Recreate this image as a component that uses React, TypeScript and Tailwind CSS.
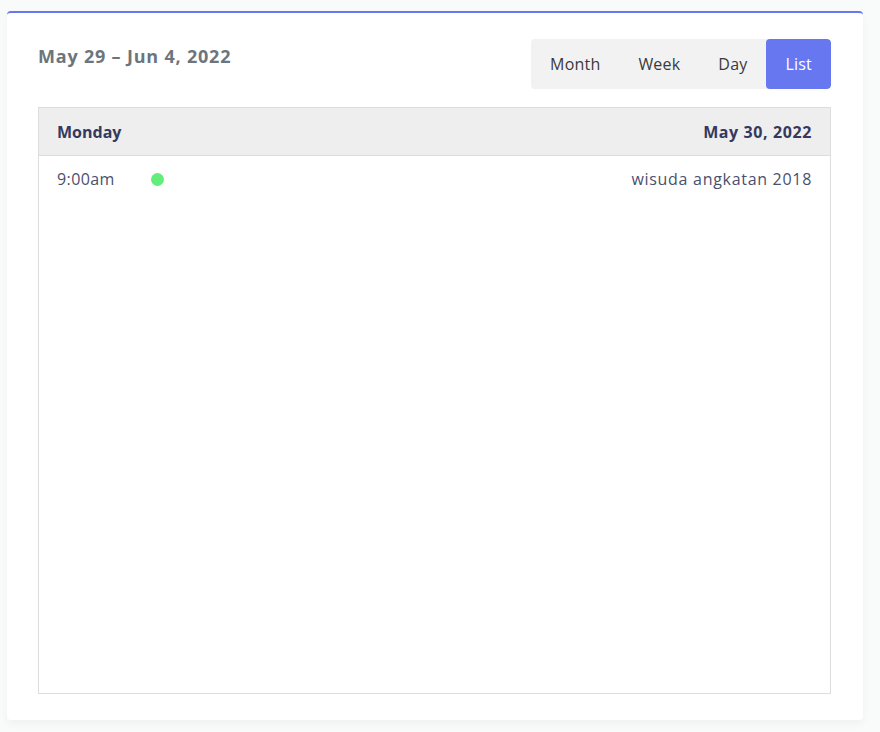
import React from "react";

const views = ["Month", "Week", "Day", "List"];

const App = () => {
  const active = "List";

  return (
    <div
      className="min-h-screen bg-[#f9fafa] pt-[11px] pl-[7px] pr-[17px] pb-[12px]"
      style={{ fontFamily: '"Open Sans", "Noto Sans", sans-serif' }}
    >
      <div className="w-[856px] h-[709px] bg-white rounded-[4px] border-t-2 border-[#6777ef] shadow-[0_4px_8px_rgba(0,0,0,0.04)] pl-[31px] pr-[32px] pt-[26px] pb-[26px] flex flex-col">
        {/* TOOLBAR */}
        <div className="flex justify-between items-start mb-[18px]">
          <h2 className="text-[18px] font-bold text-[#6c757d] mt-[3px] leading-[28px] tracking-[0.8px]">
            May 29 – Jun 4, 2022
          </h2>

          <div className="flex bg-[#f2f2f2] rounded-[4px] h-[50px] overflow-hidden">
            {views.map((v) => (
              <button
                key={v}
                className={
                  v === active
                    ? "px-[19px] text-[16px] bg-[#6777ef] text-white rounded-[4px] tracking-[0.2px]"
                    : "px-[19px] text-[16px] text-[#3a3a3a] tracking-[0.2px]"
                }
              >
                {v}
              </button>
            ))}
          </div>
        </div>

        {/* LIST */}
        <div className="flex-1 border border-[#dddddd]">
          <div className="flex justify-between items-center h-[48px] bg-[#eeeeee] border-b border-[#dddddd] px-[18px] text-[16px] font-bold text-[#34395e]">
            <span>Monday</span>
            <span className="tracking-[0.6px]">May 30, 2022</span>
          </div>

          <div className="flex items-center h-[46px] px-[18px] text-[16px] text-[#4a4f6e]">
            <span className="w-[94px] tracking-[0.4px]">9:00am</span>
            <span className="w-[13px] h-[13px] rounded-full bg-[#63ed7a]" />
            <span className="ml-auto tracking-[0.7px]">wisuda angkatan 2018</span>
          </div>
        </div>
      </div>
    </div>
  );
};

export default App;
